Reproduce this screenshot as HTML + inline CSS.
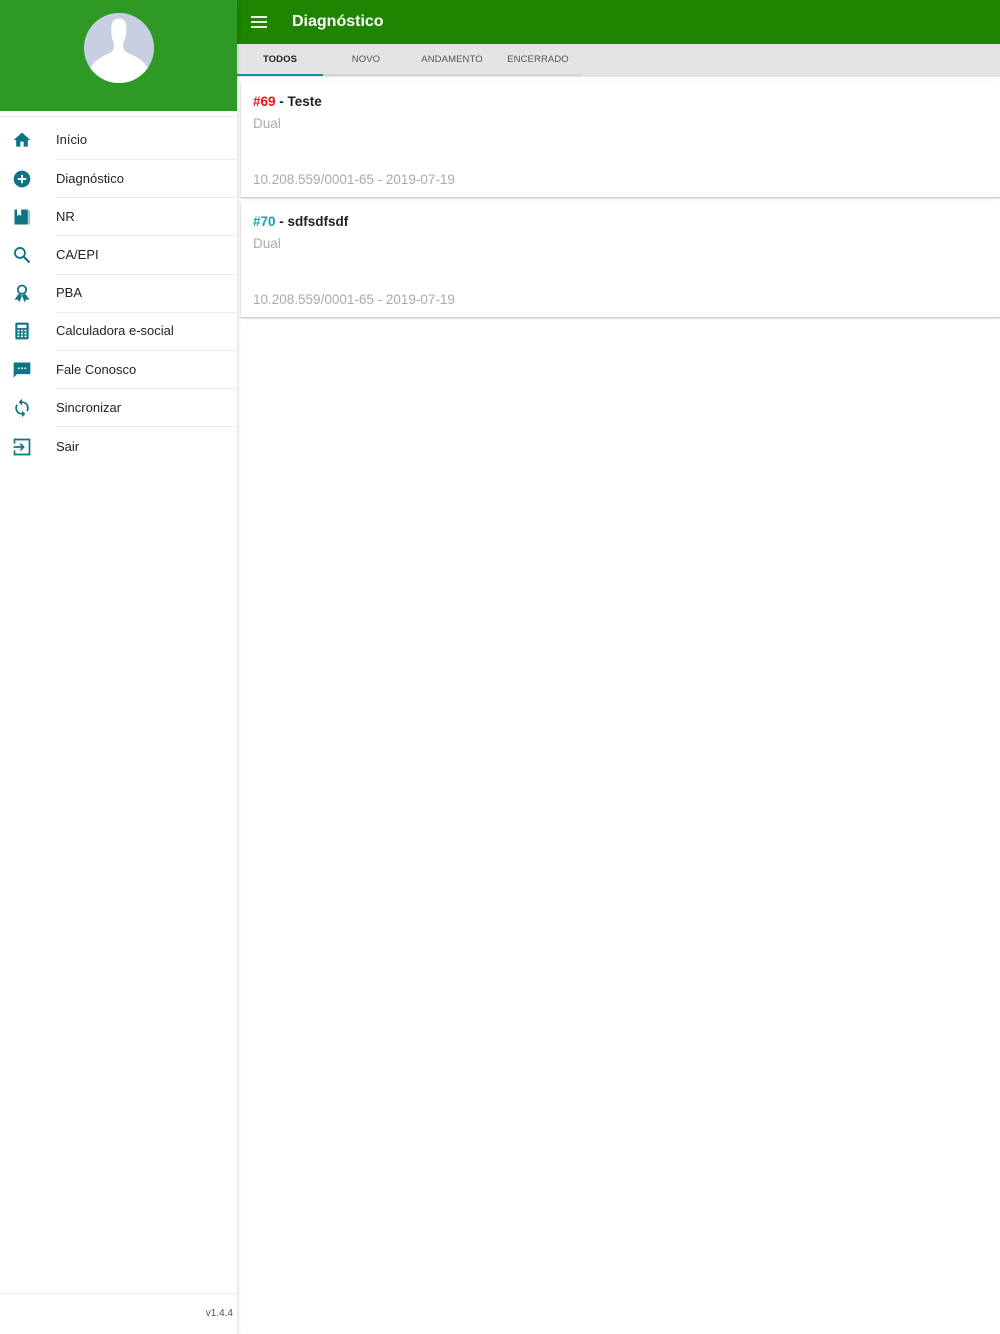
<!DOCTYPE html>
<html><head><meta charset="utf-8"><style>
*{margin:0;padding:0;box-sizing:border-box}
body{width:1000px;height:1334px;overflow:hidden;font-family:"Liberation Sans",Roboto,sans-serif;background:#fff;position:relative}
#side{position:absolute;left:0;top:0;width:237px;height:1334px;background:#fff;z-index:2;box-shadow:1px 0 4px rgba(0,0,0,.15)}
#sh{height:111px;background:#2e9a25;position:relative}
#av{position:absolute;left:84px;top:13px;width:70px;height:70px;border-radius:50%;background:#c8cfe2;overflow:hidden}
.item{position:absolute;left:0;width:237px;height:38px}
.item svg{position:absolute;left:12px;top:9px;width:20px;height:20px}
.item span{position:absolute;left:56px;top:11px;font-size:13px;color:#222}
.sep{position:absolute;left:56px;right:0;height:1px;background:#eaeaea}
#top{position:absolute;left:237px;top:0;right:0;height:44px;background:#1f8500}
#top .t{position:absolute;left:55px;top:13px;color:#fff;font-size:16px;font-weight:bold}
#tabs{position:absolute;left:237px;top:44px;right:0;height:33px;background:#e4e4e4}
.tab{position:absolute;top:10px;font-size:9.5px;color:#444;text-align:center;width:86px;font-weight:bold;letter-spacing:.1px}
.tab.n{font-weight:normal;color:#555}
.card{position:absolute;left:241px;right:0;height:115px;background:#fff;box-shadow:0 1px 2px rgba(0,0,0,.3)}
.card .h{position:absolute;left:12px;top:12px;font-size:13.5px;font-weight:bold;color:#222}
.card .d{position:absolute;left:12px;top:34px;font-size:13.5px;color:#aaa}
.card .f{position:absolute;left:12px;top:90px;font-size:13.5px;color:#aaa}
</style></head><body>
<div id="side">
<div id="sh"><div id="av"><svg width="70" height="70" viewBox="0 0 70 70"><path d="M30 7c4-3 11-2 12 4c1 6 0 13-2 17c-2 4-1 10 4 12c10 4 17 9 21 17v13H5V57c4-8 11-13 21-17c4-2 5-7 3-12c-2-6-3-17 1-21z" fill="#fff"/></svg></div></div>
<div style="position:absolute;top:116px;left:0;right:0;height:1px;background:#eee"></div>

<div class="item" style="top:121px"><svg viewBox="0 0 24 24"><path d="M10 20v-6h4v6h5v-8h3L12 3 2 12h3v8z" fill="#0f7386"/></svg><span>Início</span></div>
<div class="sep" style="top:159px"></div>
<div class="item" style="top:160px"><svg viewBox="0 0 24 24"><circle cx="12" cy="12" r="10" fill="#0f7386"/><path d="M12 7v10M7 12h10" stroke="#fff" stroke-width="2.4"/></svg><span>Diagnóstico</span></div>
<div class="sep" style="top:197px"></div>
<div class="item" style="top:198px"><svg viewBox="0 0 24 24"><path d="M3 3h16v18H3z" fill="#0f7386"/><path d="M20 4h1v17h-1z" fill="#0f7386"/><path d="M6 3h5v8l-2.5-2L6 11z" fill="#fff"/></svg><span>NR</span></div>
<div class="sep" style="top:235px"></div>
<div class="item" style="top:236px"><svg viewBox="0 0 24 24"><circle cx="9.5" cy="9.5" r="6" fill="none" stroke="#0f7386" stroke-width="2.2"/><path d="M14 14l7 7" stroke="#0f7386" stroke-width="2.6"/></svg><span>CA/EPI</span></div>
<div class="sep" style="top:274px"></div>
<div class="item" style="top:274px"><svg viewBox="0 0 24 24"><circle cx="12" cy="8" r="5" fill="none" stroke="#0f7386" stroke-width="2.2"/><path d="M8 13l-5 7h4l2 3 3-8zM16 13l5 7h-4l-2 3-3-8z" fill="#0f7386"/></svg><span>PBA</span></div>
<div class="sep" style="top:312px"></div>
<div class="item" style="top:312px"><svg viewBox="0 0 24 24"><rect x="4" y="2" width="16" height="20" rx="1.5" fill="#0f7386"/><rect x="6.5" y="4.5" width="11" height="4" fill="#fff"/><g fill="#fff"><rect x="6.5" y="10.5" width="2.5" height="2"/><rect x="10.8" y="10.5" width="2.5" height="2"/><rect x="15" y="10.5" width="2.5" height="2"/><rect x="6.5" y="14" width="2.5" height="2"/><rect x="10.8" y="14" width="2.5" height="2"/><rect x="15" y="14" width="2.5" height="2"/><rect x="6.5" y="17.5" width="2.5" height="2"/><rect x="10.8" y="17.5" width="2.5" height="2"/><rect x="15" y="17.5" width="2.5" height="2"/></g></svg><span>Calculadora e-social</span></div>
<div class="sep" style="top:350px"></div>
<div class="item" style="top:351px"><svg viewBox="0 0 24 24"><path d="M2 3h20v14H6l-4 4z" fill="#0f7386"/><g fill="#fff"><rect x="7" y="9" width="2" height="2"/><rect x="11" y="9" width="2" height="2"/><rect x="15" y="9" width="2" height="2"/></g></svg><span>Fale Conosco</span></div>
<div class="sep" style="top:388px"></div>
<div class="item" style="top:389px"><svg viewBox="0 0 24 24"><path d="M12 4V1L8 5l4 4V6a6 6 0 0 1 5.2 9l1.5 1.5A8 8 0 0 0 12 4zM12 18a6 6 0 0 1-5.2-9L5.3 7.5A8 8 0 0 0 12 20v3l4-4-4-4z" fill="#0f7386"/></svg><span>Sincronizar</span></div>
<div class="sep" style="top:426px"></div>
<div class="item" style="top:428px"><svg viewBox="0 0 24 24"><path d="M3 8V3h18v18H3v-5" fill="none" stroke="#0f7386" stroke-width="2"/><path d="M2 12h11M10 8l4 4-4 4" fill="none" stroke="#0f7386" stroke-width="2"/></svg><span>Sair</span></div>

<div style="position:absolute;top:1293px;left:0;right:0;height:1px;background:#eee"></div>
<div style="position:absolute;top:1308px;right:4px;font-size:10px;color:#555">v1.4.4</div>
</div>

<div id="top"><svg style="position:absolute;left:14px;top:16px" width="16" height="12" viewBox="0 0 16 12"><path d="M0 1h16M0 6h16M0 11h16" stroke="#e8f0e0" stroke-width="2"/></svg><div class="t">Diagnóstico</div></div>
<div id="tabs">
<div class="tab" style="left:0;color:#222">TODOS</div>
<div class="tab n" style="left:86px">NOVO</div>
<div class="tab n" style="left:172px">ANDAMENTO</div>
<div class="tab n" style="left:258px">ENCERRADO</div>
<div style="position:absolute;left:0;top:30px;width:344px;height:2px;background:#d4d4d4"></div>
<div style="position:absolute;left:0;top:30px;width:86px;height:2px;background:#1a8ca0"></div>
</div>

<div class="card" style="top:82px"><div class="h"><span style="color:#f01010">#69</span> - Teste</div><div class="d">Dual</div><div class="f">10.208.559/0001-65 - 2019-07-19</div></div>
<div class="card" style="top:202px"><div class="h"><span style="color:#18a0c0">#70</span> - sdfsdfsdf</div><div class="d">Dual</div><div class="f">10.208.559/0001-65 - 2019-07-19</div></div>
</body></html>
